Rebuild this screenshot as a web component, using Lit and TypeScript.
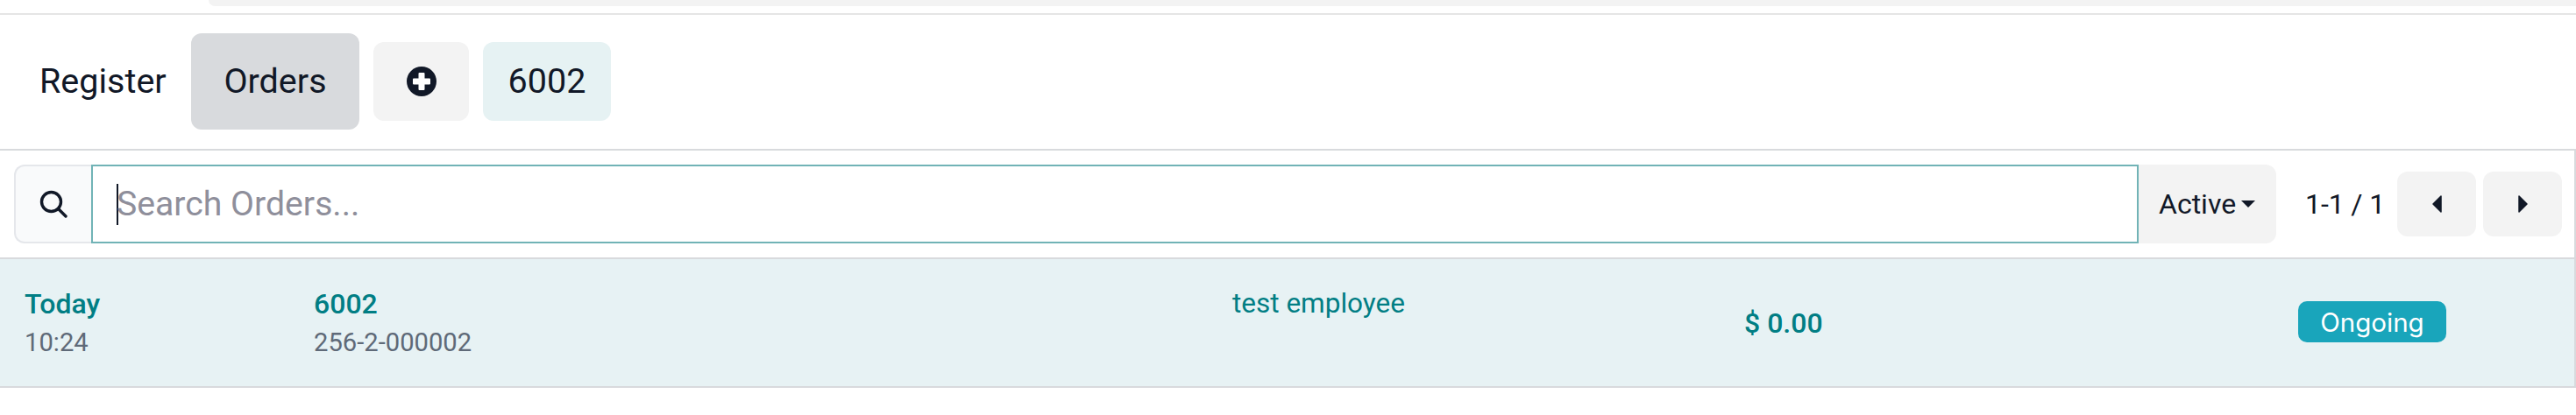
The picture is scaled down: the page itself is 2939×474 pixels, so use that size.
import { LitElement, html, css } from "lit";
import { customElement } from "lit/decorators.js";

@customElement("app-root")
export class AppRoot extends LitElement {
  static styles = css`
    :host { display: block; width: 2939px; height: 474px; overflow: hidden; background: #fff; font-family: Roboto, sans-serif; color: #111827; box-sizing: border-box; }
    * { box-sizing: border-box; }
    .topstrip { height: 15px; padding-left: 238px; }
    .topstrip div { height: 7px; background: #f3f3f3; border-bottom-left-radius: 12px; }
    .nav { height: 157px; border-top: 2px solid #e5e5e5; border-bottom: 2px solid #d8dadd; display: flex; align-items: center; padding: 0 0 2px 16px; gap: 16px; font-size: 39.5px; }
    .tab { display: flex; align-items: center; justify-content: center; height: 90px; border-radius: 12px; }
    .tab.reg { width: 186px; justify-content: flex-start; padding-left: 29px; }
    .tab.orders { width: 192px; height: 110px; background: #d8dadd; }
    .tab.plus { width: 109px; background: #f3f3f3; }
    .tab.num { width: 146px; background: #e6f2f3; }
    .bar { height: 124px; display: flex; align-items: flex-start; padding: 16px 0 0 16px; border-right: 2px solid #d8dadd; border-bottom: 2px solid #d8dadd; }
    .addon { width: 88px; height: 90px; background: #f9fafb; border: 2px solid #e5e7eb; border-right: none; border-radius: 12px 0 0 12px; display: flex; align-items: center; justify-content: center; }
    .input { width: 2336px; height: 90px; border: 2px solid #71b3b6; display: flex; align-items: center; padding-left: 27px; font-size: 39.2px; color: #8f8f9b; }
    .caret { width: 2px; height: 47px; background: #111827; margin-right: -2px; flex: none; }
    .active { width: 157px; height: 90px; background: #f3f3f3; border-radius: 0 12px 12px 0; display: flex; align-items: center; padding-left: 23px; gap: 6px; font-size: 32px; }
    .tri { width: 0; height: 0; border-left: 8px solid transparent; border-right: 8px solid transparent; border-top: 8px solid #111827; }
    .pager { display: flex; align-items: center; height: 90px; margin-left: 33px; font-size: 32px; gap: 8px; }
    .count { width: 97px; letter-spacing: -0.1px; }
    .pbtn { width: 90px; height: 74px; background: #f3f3f3; border-radius: 12px; display: flex; align-items: center; justify-content: center; }
    .row { display: grid; grid-template-columns: 330px 1048px 584px 632px 1fr; height: 147px; background: #e7f2f4; border-bottom: 2px solid #d8dadd; border-right: 2px solid #d8dadd; padding-left: 28px; color: #017e84; font-size: 31.5px; }
    .row > div { padding-top: 32px; }
    .sub { color: #5f6a78; font-size: 29.2px; margin-top: 6px; line-height: 38px; }
    .main { line-height: 38px; }
    .b { font-size: 32px; font-weight: 500; }
    .amt { padding-top: 54px !important; }
    .badge { display: inline-flex; align-items: center; justify-content: center; width: 169px; height: 47px; background: #19a5bb; color: #fff; border-radius: 10px; font-family: Inter, sans-serif; font-size: 29.5px; margin-top: 16px; }
  `;

  render() {
    return html`
      <div class="topstrip"><div></div></div>
      <div class="nav">
        <div class="tab reg">Register</div>
        <div class="tab orders">Orders</div>
        <div class="tab plus">
          <svg width="34" height="34" viewBox="0 0 34 34"><circle cx="17" cy="17" r="17" fill="#111827"/><path d="M14.500 7h5a1 1 0 0 1 1 1v5.500H26a1 1 0 0 1 1 1v5a1 1 0 0 1-1 1h-5.500V26a1 1 0 0 1-1 1h-5a1 1 0 0 1-1-1v-5.500H8a1 1 0 0 1-1-1v-5a1 1 0 0 1 1-1h5.500V8a1 1 0 0 1 1-1z" fill="#fff"/></svg>
        </div>
        <div class="tab num">6002</div>
      </div>
      <div class="bar">
        <div class="addon">
          <svg width="32" height="32" viewBox="0 0 32 32" fill="none" stroke="#111827" stroke-width="3.4" stroke-linecap="round"><circle cx="13.5" cy="13.5" r="11"/><path d="M21.5 21.5 L30 30"/></svg>
        </div>
        <div class="input"><span class="caret"></span>Search Orders...</div>
        <div class="active">Active<span class="tri"></span></div>
        <div class="pager">
          <span class="count">1-1 / 1</span>
          <div class="pbtn"><svg width="11" height="20" viewBox="0 0 11 20"><path d="M10 1v18L1 10z" fill="#111827" stroke="#111827" stroke-width="1.5" stroke-linejoin="round"/></svg></div>
          <div class="pbtn"><svg width="11" height="20" viewBox="0 0 11 20"><path d="M1 1v18l9-9z" fill="#111827" stroke="#111827" stroke-width="1.5" stroke-linejoin="round"/></svg></div>
        </div>
      </div>
      <div class="row">
        <div><div class="main b">Today</div><div class="sub">10:24</div></div>
        <div><div class="main b">6002</div><div class="sub">256-2-000002</div></div>
        <div><div class="main">test employee</div></div>
        <div class="amt b">$ 0.00</div>
        <div><span class="badge">Ongoing</span></div>
      </div>
    `;
  }
}
